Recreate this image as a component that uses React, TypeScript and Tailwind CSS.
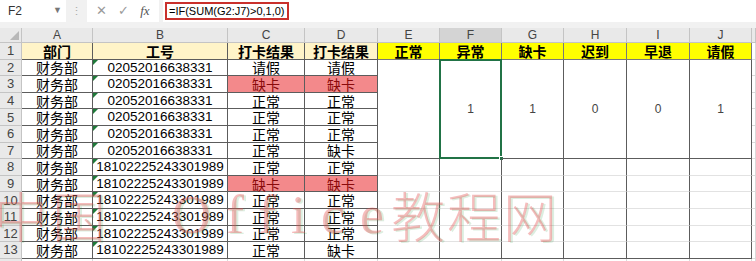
import type { ReactNode } from 'react'

const cjk = "font-['Noto_Sans_CJK_SC','Noto_Sans',sans-serif]"
const num = "font-['Liberation_Sans','Noto_Sans_CJK_SC',sans-serif]"

const letters = ['A', 'B', 'C', 'D', 'E', 'F', 'G', 'H', 'I', 'J', '']

const rows: [string, string, string, string][] = [
  ['财务部', '02052016638331', '请假', '请假'],
  ['财务部', '02052016638331', '缺卡', '缺卡'],
  ['财务部', '02052016638331', '正常', '正常'],
  ['财务部', '02052016638331', '正常', '正常'],
  ['财务部', '02052016638331', '正常', '正常'],
  ['财务部', '02052016638331', '正常', '缺卡'],
  ['财务部', '18102225243301989', '正常', '正常'],
  ['财务部', '18102225243301989', '缺卡', '缺卡'],
  ['财务部', '18102225243301989', '正常', '正常'],
  ['财务部', '18102225243301989', '正常', '正常'],
  ['财务部', '18102225243301989', '正常', '正常'],
  ['财务部', '18102225243301989', '正常', '缺卡'],
]

const summary = ['', '1', '1', '0', '0', '1']

function Cell({ children, className = '' }: { children?: ReactNode; className?: string }) {
  return (
    <div className={`relative flex items-center justify-center whitespace-nowrap leading-none border-r border-b ${className}`}>
      {children}
    </div>
  )
}

function TextFlag() {
  return <span className="absolute left-0 top-0 h-0 w-0 border-t-[5px] border-r-[5px] border-t-[#1f7a3a] border-r-transparent" />
}

function FormulaBar() {
  return (
    <div className="flex h-[28px] items-start bg-[#f1f1f1]">
      <div className={`flex h-[22px] w-[66px] items-center justify-between bg-white pl-2 pr-1 text-[12px] text-[#333] ${num}`}>
        <span>F2</span>
        <span className="text-[9px] text-[#777]">▼</span>
      </div>
      <div className="flex h-[22px] w-[21px] items-center justify-center text-[11px] text-[#aaa]">⋮</div>
      <div className="flex h-[22px] w-[72px] items-center justify-around bg-white px-1 text-[13px] text-[#9a9a9a]">
        <span>✕</span>
        <span>✓</span>
        <span className="font-['Liberation_Serif',serif] italic text-[#555]">fx</span>
      </div>
      <div className="ml-[4px] flex h-[22px] flex-1 items-center bg-white pl-[2px]">
        <span className={`flex h-[18px] items-center border-2 border-[#c9302c] px-[2px] text-[11px] text-black ${num}`}>
          =IF(SUM(G2:J7)&gt;0,1,0)
        </span>
      </div>
    </div>
  )
}

export default function App() {
  const dark = 'border-[#5c5c5c]'
  return (
    <div className="relative h-[261px] w-[756px] overflow-hidden bg-white">
      <FormulaBar />
      <div className="grid grid-cols-[22px_71px_135px_77px_73px_62px_62px_62px_63px_63px_62px_4px] grid-rows-[15px_repeat(13,16.6px)_4px]">
        {/* column headers */}
        <Cell className="border-[#c4c4c4] bg-[#e9e9e9]">
          <span className="absolute bottom-[2px] right-[2px] h-0 w-0 border-b-[9px] border-l-[9px] border-b-[#b8b8b8] border-l-transparent" />
        </Cell>
        {letters.map((l) => (
          <Cell
            key={l || 'K'}
            className={`${l === 'F' ? 'bg-[#d4d4d4]' : 'bg-[#e9e9e9]'} border-[#c4c4c4] text-[12px] text-[#444] ${num}`}
          >
            {l}
          </Cell>
        ))}

        {/* row 1 */}
        <Cell className={`border-[#c4c4c4] bg-[#e9e9e9] text-[13px] text-[#444] ${num}`}>1</Cell>
        {['部门', '工号', '打卡结果', '打卡结果'].map((h, i) => (
          <Cell key={i} className={`${dark} bg-[#fff4c8] text-[14px] font-bold text-black ${cjk}`}>{h}</Cell>
        ))}
        {['正常', '异常', '缺卡', '迟到', '早退', '请假'].map((h) => (
          <Cell key={h} className={`border-[#7a7a7a] bg-[#ffff00] text-[14px] font-bold text-black ${cjk}`}>{h}</Cell>
        ))}
        <Cell className="border-[#dadada]" />

        {/* rows 2-13 */}
        {rows.map((r, i) => {
          const n = i + 2
          const red = n === 3 || n === 9
          return [
            <Cell key={`n${n}`} className={`border-[#c4c4c4] bg-[#e9e9e9] text-[13px] text-[#444] ${num}`}>{n}</Cell>,
            <Cell key={`a${n}`} className={`${dark} text-[14px] text-black ${cjk}`}>{r[0]}</Cell>,
            <Cell key={`b${n}`} className={`${dark} text-[13.5px] text-black ${num}`}>
              <TextFlag />
              {r[1]}
            </Cell>,
            <Cell key={`c${n}`} className={`${dark} text-[14px] ${cjk} ${red ? 'bg-[#f3898b] text-[#8a0b0b]' : 'text-black'}`}>{r[2]}</Cell>,
            <Cell key={`d${n}`} className={`${dark} text-[14px] ${cjk} ${red ? 'bg-[#f3898b] text-[#8a0b0b]' : 'text-black'}`}>{r[3]}</Cell>,
            ...(n === 2
              ? summary.map((v, j) => (
                  <Cell key={`s${j}`} className={`row-span-6 ${dark} text-[12px] text-[#444] ${num}`}>
                    {v}
                    {j === 1 && (
                      <>
                        <span className="pointer-events-none absolute inset-[-1px] border-2 border-[#217346]" />
                        <span className="absolute bottom-[-3px] right-[-3px] h-[5px] w-[5px] border border-white bg-[#217346]" />
                      </>
                    )}
                  </Cell>
                ))
              : []),
            ...(n >= 8
              ? summary.map((_, j) => (
                  <Cell key={`e${n}${j}`} className={`border-r-[#5c5c5c] ${n === 13 ? 'border-b-[#5c5c5c]' : 'border-b-[#e2e2e2]'}`} />
                ))
              : []),
            <Cell key={`k${n}`} className="border-[#dadada]" />,
          ]
        })}

        {/* row 14 partial */}
        <Cell className="border-[#c4c4c4] bg-[#e9e9e9]" />
        {letters.map((l) => (
          <Cell key={`z${l}`} className="border-[#dadada]" />
        ))}
      </div>

      {/* watermark */}
      <div className="pointer-events-none absolute left-[-6px] top-[188px] flex items-end text-[54px] font-light leading-none text-[rgba(228,80,80,0.38)] [text-shadow:2px_1px_0_rgba(40,150,60,0.16)]">
        <span className={`tracking-[4px] ${cjk}`}>中国</span>
        <span className="ml-[62px] font-['Liberation_Serif',serif] tracking-[15px]">Office</span>
        <span className={`ml-[-8px] tracking-[2px] ${cjk}`}>教程网</span>
      </div>
    </div>
  )
}
